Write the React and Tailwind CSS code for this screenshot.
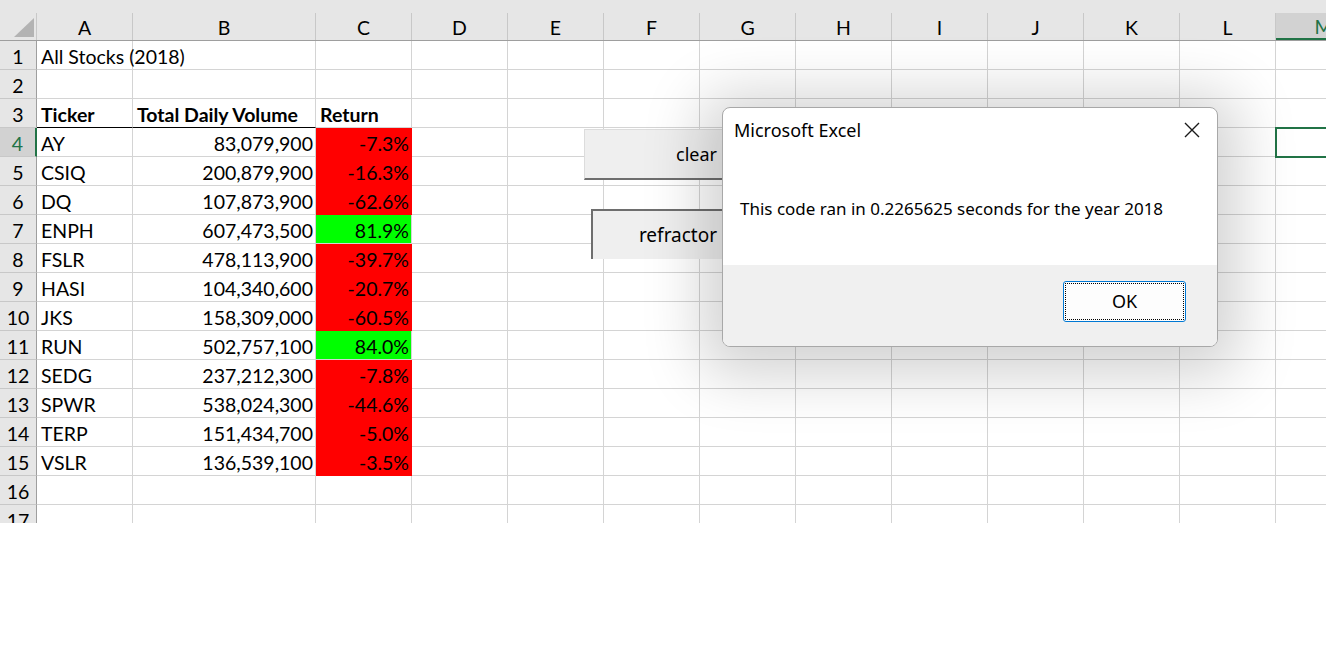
import React from 'react';

const COLS = [
  { k: 'A', w: 96 },
  { k: 'B', w: 183 },
  { k: 'C', w: 96 },
  { k: 'D', w: 96 },
  { k: 'E', w: 96 },
  { k: 'F', w: 96 },
  { k: 'G', w: 96 },
  { k: 'H', w: 96 },
  { k: 'I', w: 96 },
  { k: 'J', w: 96 },
  { k: 'K', w: 96 },
  { k: 'L', w: 96 },
  { k: 'M', w: 96 },
];

const STOCKS = [
  ['AY', '83,079,900', '-7.3%', false],
  ['CSIQ', '200,879,900', '-16.3%', false],
  ['DQ', '107,873,900', '-62.6%', false],
  ['ENPH', '607,473,500', '81.9%', true],
  ['FSLR', '478,113,900', '-39.7%', false],
  ['HASI', '104,340,600', '-20.7%', false],
  ['JKS', '158,309,000', '-60.5%', false],
  ['RUN', '502,757,100', '84.0%', true],
  ['SEDG', '237,212,300', '-7.8%', false],
  ['SPWR', '538,024,300', '-44.6%', false],
  ['TERP', '151,434,700', '-5.0%', false],
  ['VSLR', '136,539,100', '-3.5%', false],
];

const cellFont = { fontFamily: 'Lato, "Liberation Sans", sans-serif' };

function Cell({ w, children, className = '' }) {
  return (
    <div
      style={{ width: w }}
      className={`h-[29px] shrink-0 border-r border-b border-[#d4d4d4] pl-[4px] pr-[2px] pt-[3px] flex items-center whitespace-nowrap text-[19.5px] text-black ${className}`}
    >
      {children}
    </div>
  );
}

function rowCells(r) {
  // content for columns A, B, C
  if (r === 1) return [{ t: 'All Stocks (2018)', cls: 'overflow-visible z-10' }, { t: '' }, { t: '' }];
  if (r === 3)
    return [
      { t: 'Ticker', cls: 'font-bold border-b-black' },
      { t: 'Total Daily Volume', cls: 'font-bold border-b-black' },
      { t: 'Return', cls: 'font-bold' },
    ];
  if (r >= 4 && r <= 15) {
    const [tk, vol, ret, up] = STOCKS[r - 4];
    return [
      { t: tk },
      { t: vol, cls: 'justify-end' },
      { t: ret, cls: `justify-end ${up ? 'bg-[#00ff00] border-[#00ff00]' : 'bg-[#ff0000] border-[#ff0000]'}` },
    ];
  }
  return [{ t: '' }, { t: '' }, { t: '' }];
}

function Sheet() {
  const rows = Array.from({ length: 17 }, (_, i) => i + 1);
  return (
    <div className="h-[523px] overflow-hidden bg-white">
      <div className="h-[13px] bg-[#e6e6e6]" />
      {/* column headers */}
      <div className="flex h-[28px] bg-[#e6e6e6] border-b border-[#9e9e9e]">
        <div className="w-[37px] shrink-0 border-r border-[#c8c8c8] relative">
          <svg width="37" height="28" className="absolute left-0 top-0">
            <polygon points="14,24 34,24 34,5" fill="#b3b3b3" />
          </svg>
        </div>
        {COLS.map((c) => (
          <div
            key={c.k}
            style={{ width: c.w, ...cellFont }}
            className={`shrink-0 flex items-center justify-center pt-[3px] text-[19.5px] border-r border-[#c8c8c8] ${
              c.k === 'M' ? 'bg-[#d2d2d2] text-[#217346] border-b-2 border-b-[#217346]' : 'text-black'
            }`}
          >
            {c.k}
          </div>
        ))}
      </div>
      {rows.map((r) => {
        const abc = rowCells(r);
        const sel = r === 4;
        return (
          <div key={r} className="flex" style={cellFont}>
            <div
              className={`w-[37px] h-[29px] shrink-0 flex items-center justify-center pt-[3px] text-[19.5px] border-b ${
                sel
                  ? 'bg-[#d2d2d2] text-[#217346] border-r-2 border-r-[#217346] border-b-[#c8c8c8]'
                  : 'bg-[#e6e6e6] text-black border-r border-r-[#9e9e9e] border-b-[#c8c8c8]'
              }`}
            >
              {r}
            </div>
            {COLS.map((c, i) => {
              if (i < 3) {
                const d = abc[i];
                return (
                  <Cell key={c.k} w={c.w} className={d.cls || ''}>
                    {d.t}
                  </Cell>
                );
              }
              if (c.k === 'M' && sel) {
                return (
                  <div key={c.k} style={{ width: c.w }} className="h-[29px] shrink-0 relative border-b border-[#d4d4d4]">
                    <div className="absolute -left-[1px] -top-[1px] w-[100px] h-[31px] border-2 border-[#217346]" />
                  </div>
                );
              }
              return <Cell key={c.k} w={c.w} />;
            })}
          </div>
        );
      })}
    </div>
  );
}

export default function App() {
  const ui = { fontFamily: '"Noto Sans", "Open Sans", sans-serif' };
  return (
    <div className="relative w-[1326px] h-[648px] bg-white overflow-hidden">
      <Sheet />

      {/* sheet buttons */}
      <div
        style={ui}
        className="absolute left-[584px] top-[129px] w-[226px] h-[51px] bg-[#efefef] border-t border-l border-[#dcdcdc] border-b-2 border-b-[#6e6e6e] border-r-2 border-r-[#6e6e6e] flex items-center justify-center text-[18px] text-black"
      >
        clear
      </div>
      <div
        style={ui}
        className="absolute left-[591px] top-[209px] w-[172px] h-[50px] bg-[#efefef] border-t-2 border-l-2 border-[#6e6e6e] flex items-center justify-center text-[19px] text-black"
      >
        refractor
      </div>

      {/* dialog */}
      <div
        style={ui}
        className="absolute left-[722px] top-[107px] w-[496px] h-[240px] rounded-[8px] border border-[#a8a8a8] bg-white overflow-hidden shadow-[0_8px_60px_20px_rgba(0,0,0,0.18)] flex flex-col"
      >
        <div className="h-[157px] flex flex-col">
          <div className="flex items-start justify-between pl-[11px] pr-[16px] pt-[9px]">
            <span className="text-[18px] text-black">Microsoft Excel</span>
            <svg width="18" height="18" viewBox="0 0 18 18" className="mt-[4px]">
              <path d="M2 2 L16 16 M16 2 L2 16" stroke="#1a1a1a" strokeWidth="1.4" fill="none" />
            </svg>
          </div>
          <p className="pl-[17px] mt-[52px] text-[17px] text-black">
            This code ran in 0.2265625 seconds for the year 2018
          </p>
        </div>
        <div className="flex-1 bg-[#f0f0f0] flex items-start justify-end pr-[31px] pt-[16px]">
          <button className="w-[123px] h-[41px] rounded-[3px] border border-[#0078d4] bg-[#fdfdfd] p-[1px]">
            <div className="w-full h-full border border-dotted border-black flex items-center justify-center text-[18px] text-black">
              OK
            </div>
          </button>
        </div>
      </div>
    </div>
  );
}
